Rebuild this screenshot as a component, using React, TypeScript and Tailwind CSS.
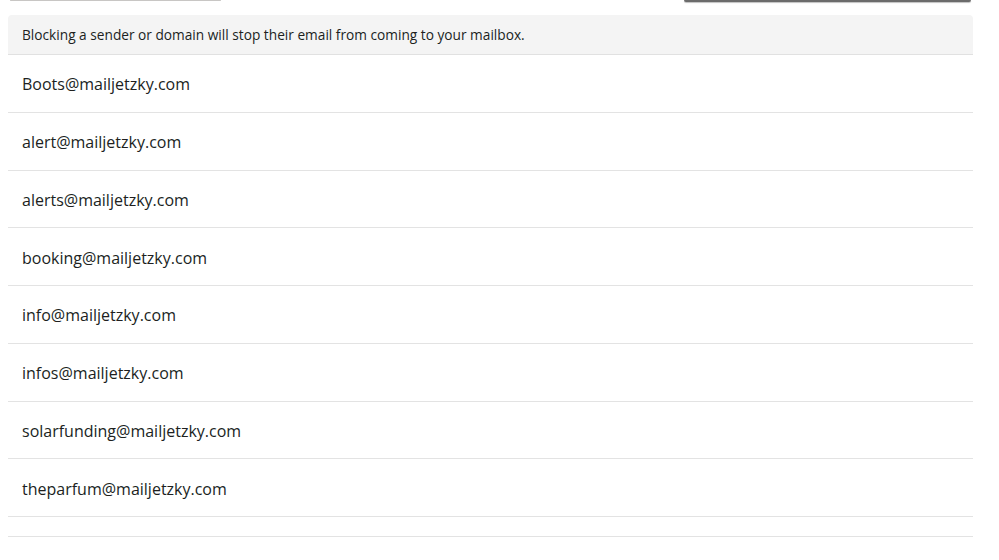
import React from 'react';

const blocked = [
  'Boots@mailjetzky.com',
  'alert@mailjetzky.com',
  'alerts@mailjetzky.com',
  'booking@mailjetzky.com',
  'info@mailjetzky.com',
  'infos@mailjetzky.com',
  'solarfunding@mailjetzky.com',
  'theparfum@mailjetzky.com',
];

export default function App() {
  return (
    <div className="w-[999px] h-[560px] bg-white overflow-hidden font-['Open_Sans','Noto_Sans',sans-serif] text-[#201f1e]">
      {/* edges of the controls above */}
      <div className="flex h-[15px] items-start">
        <div className="ml-[10px] w-[211px] h-[1px] bg-[#c8c6c4] rounded-full" />
        <div className="ml-[463px] w-[287px] h-[2px] bg-[#6b6b6b] shadow-[0_1px_1px_rgba(0,0,0,0.25)] rounded-b-sm" />
      </div>

      <div className="mx-[8px] w-[965px]">
        <div className="h-[40px] flex items-center px-[14px] pt-[1px] bg-[#f4f4f4] rounded-t-[4px] border-b border-[#e1e1e1] text-[13.7px]">
          Blocking a sender or domain will stop their email from coming to your mailbox.
        </div>
        <ul>
          {blocked.map((email) => (
            <li
              key={email}
              className="h-[57.75px] flex items-center px-[14px] pt-[2px] border-b border-[#e3e3e3] text-[16px]"
            >
              {email}
            </li>
          ))}
          <li className="h-[20px] border-b border-[#e3e3e3]" />
        </ul>
      </div>
    </div>
  );
}
